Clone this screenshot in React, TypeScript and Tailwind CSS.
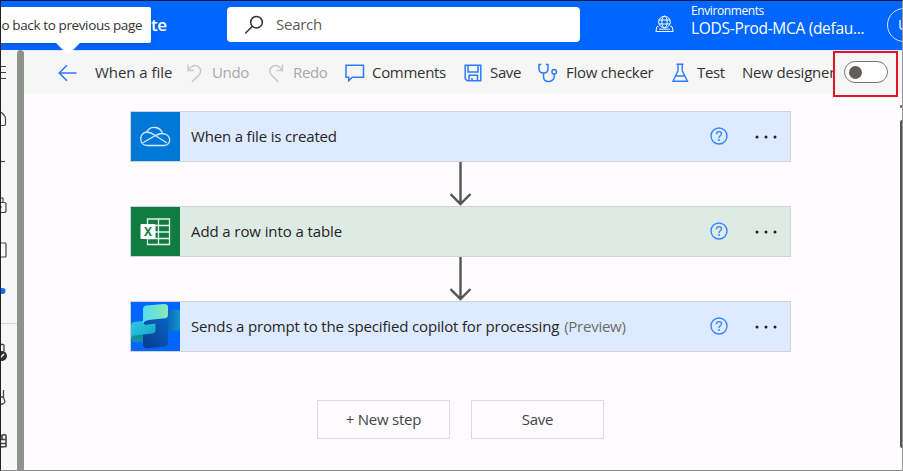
import React from 'react';

const fontStack = "font-['Open_Sans','Noto_Sans',sans-serif]";

function Sidebar() {
  return (
    <nav className="flex h-full w-[16px] shrink-0 flex-col overflow-hidden bg-[#f7f7f7] text-[#444]">
      <svg className="h-[273px] w-[16px] shrink-0" viewBox="0 0 16 273" fill="none" stroke="currentColor" strokeWidth="1.2">
        <path d="M0 16.5h5M0 22.5h5M0 28.5h5" />
        <path d="M-4 65q3-4 5-2l2 2q1.500 1.500 1.500 4v5q0 1.500-1.500 1.500H-1" />
        <path d="M-5 111.500h9" />
        <path d="M-2 148h4v5M-3 154.500q0-2 2-2h4q2 0 2 2v6q0 2-2 2h-4M-3 157h4" />
        <path d="M-4 193h8q1 0 1 1v12q0 1-1 1h-8" />
        <circle cx="1.500" cy="241" r="3" fill="#0f6cff" stroke="none" />
      </svg>
      <div className="h-px w-full shrink-0 bg-[#d5d5d5]" />
      <svg className="h-[146px] w-[16px] shrink-0" viewBox="0 324 16 146" fill="none" stroke="currentColor" strokeWidth="1.3">
        <path d="M-1 344.500h3q1 0 1 1v6" />
        <circle cx="1" cy="356" r="5" fill="#333" stroke="none" />
        <path d="M-1 358l4-4" stroke="#fff" />
        <path d="M-1 388v9h4M2.500 390v8q3 5-1 6h-3" />
        <path d="M0 435.500l4-1q1 0 1 2v10l-6 .5M-1 439.500h6M-1 443.500h6M1 435v5" strokeWidth="1.600" />
      </svg>
    </nav>
  );
}

function Header() {
  return (
    <header className="flex h-[49px] shrink-0 items-center overflow-hidden bg-[#0066ff] text-white">
      <div className="mt-[-2px] w-[226px] shrink-0 pl-[150px] text-[17px] font-semibold leading-[24px] tracking-[-0.5px]">te</div>
      <div className="mt-[-2px] flex h-[35px] w-[353px] shrink-0 items-center rounded-[4px] bg-white text-[#5c5c5c]">
        <svg className="ml-[17px] h-[20px] w-[20px]" viewBox="0 0 20 20" fill="none" stroke="#333" strokeWidth="1.5">
          <circle cx="12.500" cy="7.200" r="5.800" />
          <path d="M8.300 11.300L1.200 18.500" />
        </svg>
        <span className="ml-[12px] text-[15px] tracking-[-0.25px]">Search</span>
      </div>
      <svg className="ml-[75px] mt-[-3px] h-[18px] w-[19px] shrink-0" viewBox="0 0 19 18" fill="none" stroke="#fff" strokeWidth="1">
        <circle cx="9.500" cy="7" r="5.800" />
        <ellipse cx="9.500" cy="7" rx="2.600" ry="5.800" />
        <path d="M3.700 5h11.600M3.700 9h11.600M3.500 11.500H2L.8 16.500h17.400L17 11.500h-1.500M4 14.200h11" />
      </svg>
      <div className="mt-[-12px] ml-[17px] w-[196px] shrink-0">
        <div className="text-[12px] leading-[17px] tracking-[-0.4px]">Environments</div>
        <div className="text-[15.500px] leading-[19px] tracking-[-0.3px]">LODS-Prod-MCA (defau...</div>
      </div>
      <div className="mt-[-2px] flex h-[34px] w-[34px] shrink-0 items-center rounded-full border border-[#d7e5ff] pl-[10px] text-[14px]">U</div>
    </header>
  );
}

function CommandIcon({ width, children }: { width: string; children: React.ReactNode }) {
  return <span className={`flex shrink-0 items-center ${width}`}>{children}</span>;
}

function CommandBar() {
  return (
    <div className="flex h-[44px] shrink-0 items-center whitespace-nowrap border-t border-[#dbe7fb] bg-[#f6f6f6] pl-[34px] text-[15px] tracking-[-0.35px] text-[#333]">
      <CommandIcon width="w-[37px]">
        <svg className="h-[18px] w-[19px]" viewBox="0 0 19 18" fill="none" stroke="#2b7aff" strokeWidth="1.5">
          <path d="M18.500 9H1.500M9 1.200L1.200 9 9 16.800" />
        </svg>
      </CommandIcon>
      <span className="w-[92px] shrink-0 tracking-[-0.05px]">When a file</span>
      <CommandIcon width="w-[25px]">
        <svg className="h-[20px] w-[16px]" viewBox="0 0 16 20" fill="none" stroke="#c9c9c9" strokeWidth="1.500">
          <path d="M1 1.500v6h6M1.500 7C4 3.500 7.500 1.800 10.500 3.200c4 1.900 4 6.300 1.300 9L5 18.800" />
        </svg>
      </CommandIcon>
      <span className="w-[56px] shrink-0 text-[#a9a9a9]">Undo</span>
      <CommandIcon width="w-[25px]">
        <svg className="h-[20px] w-[16px]" viewBox="0 0 16 20" fill="none" stroke="#c9c9c9" strokeWidth="1.500">
          <path d="M14.500 1.500v6h-6M14 7C11.500 3.500 8 1.800 5 3.200c-4 1.900-4 6.300-1.300 9l6.500 6.600" />
        </svg>
      </CommandIcon>
      <span className="w-[52px] shrink-0 text-[#a9a9a9]">Redo</span>
      <CommandIcon width="w-[27px]">
        <svg className="h-[18px] w-[20px]" viewBox="0 0 20 18" fill="none" stroke="#2b7aff" strokeWidth="1.500">
          <path d="M1 1.200h17.500v12H7.300L3.700 16.700v-3.500H1z" />
        </svg>
      </CommandIcon>
      <span className="w-[92px] shrink-0 tracking-[-0.3px]">Comments</span>
      <CommandIcon width="w-[26px]">
        <svg className="h-[18px] w-[18px]" viewBox="0 0 18 18" fill="none" stroke="#2b7aff" strokeWidth="1.500">
          <path d="M1.200 1.200h15.600v15.600H3.200l-2-2zM4 1.500V8h10V1.500M5 16.500v-5.200h8.500v5.200M8 16.500v-2.500" />
        </svg>
      </CommandIcon>
      <span className="w-[48px] shrink-0">Save</span>
      <CommandIcon width="w-[28px]">
        <svg className="h-[20px] w-[20px]" viewBox="0 0 20 20" fill="none" stroke="#2b7aff" strokeWidth="1.500">
          <path d="M3.200 1.500H1v4.200c0 2.600 1.900 4.300 4.500 4.300S10 8.300 10 5.700V1.500H7.800M5.500 10v3.500c0 3 2 5 5 5s5.700-2 5.700-5V11" />
          <circle cx="16.200" cy="8.700" r="2.300" />
        </svg>
      </CommandIcon>
      <span className="w-[106px] shrink-0 tracking-[-0.25px]">Flow checker</span>
      <CommandIcon width="w-[25px]">
        <svg className="h-[20px] w-[17px]" viewBox="0 0 17 20" fill="none" stroke="#2b7aff" strokeWidth="1.400">
          <path d="M4.500 1.200h7M6 1.200v6.600L1 18.300h14.500L10.200 7.800V1.200M3.700 13h9" />
        </svg>
      </CommandIcon>
      <span className="w-[45px] shrink-0">Test</span>
      <span className="w-[102px] shrink-0 tracking-[-0.2px]">New designer</span>
      <span className="mb-px flex h-[22px] w-[44px] shrink-0 items-center rounded-full border border-[#777] bg-white pl-[4px]">
        <span className="h-[13px] w-[13px] rounded-full bg-[#605d5a]" />
      </span>
    </div>
  );
}

function OneDriveIcon() {
  return (
    <svg className="h-[49px] w-[49px]" viewBox="0 0 49 49" fill="none" stroke="#d8ebfb" strokeWidth="1.300">
      <path d="M16 33.500c-8 0-8.500-12-.5-13.500 4-6.500 13.500-6 16 1.500 9 .5 9.500 12 1.500 12z" />
      <path d="M15.500 20c3.500 0 5 1 8 3l12.500 8M31.500 21.500c-3 0-5 1-7.500 2.300L11.500 31" />
    </svg>
  );
}

function ExcelIcon() {
  return (
    <div className="grid h-[49px] w-[49px] grid-cols-1 grid-rows-1 bg-[#107c41]">
      <svg className="col-start-1 row-start-1 h-[49px] w-[49px]" viewBox="0 0 49 49" fill="none" stroke="#e5f2eb" strokeWidth="1.300">
        <path d="M16.500 12h22v25.500h-22zM27.500 12v25.500M16.500 18.500h22M16.500 25h22M16.500 31.500h22" />
        <rect x="9.500" y="17" width="15" height="15" rx="1" fill="#fff" stroke="none" />
      </svg>
      <span className="col-start-1 row-start-1 ml-[10px] mt-[17px] h-[15px] w-[14px] text-center text-[12px] font-bold leading-[15px] text-[#107c41]">X</span>
    </div>
  );
}

function CopilotIcon() {
  return (
    <svg className="h-[49px] w-[49px]" viewBox="0 0 49 49">
      <defs>
        <linearGradient id="top" x1="0" y1="0" x2="1" y2="0"><stop stopColor="#55dcf0" /><stop offset="1" stopColor="#8be8b4" /></linearGradient>
        <linearGradient id="left" x1="0" y1="0" x2="1" y2="1"><stop stopColor="#2fcbe0" /><stop offset="1" stopColor="#14a3c8" /></linearGradient>
        <linearGradient id="right" x1="0" y1="0" x2="1" y2="0"><stop stopColor="#0a64b8" /><stop offset="1" stopColor="#1294cf" /></linearGradient>
        <linearGradient id="bottom" x1="0" y1="1" x2="1" y2="0"><stop stopColor="#073b8e" /><stop offset="1" stopColor="#0863c1" /></linearGradient>
      </defs>
      <path fill="#0066ff" d="M0 0h49v49H0z" />
      <path fill="url(#right)" d="M36 9q1-1 4-1l6-.5q3 0 3 3V26q0 2.500-3 3l-10 1z" />
      <path fill="#128fa6" d="M0 33l12-1v8l-7 .5Q0 41 0 35z" />
      <path fill="url(#bottom)" d="M12 17h25v24q0 3-3 3.500l-17 1.700q-5 .3-5-4.200z" />
      <path fill="url(#left)" d="M0 24q0-3.500 3-4l9-1q0 4 3 3.700l9.500-1.200V28q0 3-3 3.500L5 33.300q-4 .5-5 2.700z" />
      <path fill="url(#top)" d="M12 7.500q0-3.500 3-4L33 2q4 0 4 3v8q0 3-3.500 3.300L18 18q-6 1-6 5z" />
    </svg>
  );
}

function StepCard({ tint, iconBg, icon, title, titleClass = '', note }: { tint: string; iconBg: string; icon: React.ReactNode; title: string; titleClass?: string; note?: string }) {
  return (
    <section className={`flex h-[51px] w-[661px] items-center border border-[#d2d3d5] text-[15px] ${tint}`}>
      <div className={`h-[49px] w-[49px] shrink-0 ${iconBg}`}>{icon}</div>
      <div className="w-[530px] shrink-0 whitespace-nowrap pl-[11px] text-[#252525]">
        <span className={titleClass}>{title}</span>
        {note && <span className="ml-[5px] tracking-[-0.25px] text-[#6b6b6b]">{note}</span>}
      </div>
      <svg className="mb-px h-[18px] w-[18px] shrink-0" viewBox="0 0 18 18" fill="none" stroke="#3b86ff" strokeWidth="1.400">
        <circle cx="9" cy="9" r="8" />
        <path d="M6.500 7.200c0-3.500 5-3.300 5-.4 0 2-2.500 2-2.500 4.200" />
        <circle cx="9" cy="13" r=".4" />
      </svg>
      <svg className="ml-[25px] h-[6px] w-[26px] shrink-0" viewBox="0 0 26 6" fill="#222">
        <circle cx="4" cy="3" r="1.500" /><circle cx="13" cy="3" r="1.500" /><circle cx="22" cy="3" r="1.500" />
      </svg>
    </section>
  );
}

function Connector() {
  return (
    <svg className="ml-[320px] h-[44px] w-[22px]" viewBox="0 0 22 44" fill="none" stroke="#555" strokeWidth="2.400">
      <path d="M10.500 0v42M.5 32l10 10 10-10" />
    </svg>
  );
}

function ActionButton({ children }: { children: React.ReactNode }) {
  return <button className="h-[39px] w-[133px] border border-[#dcdce0] text-[15px] tracking-[-0.25px] text-[#444]">{children}</button>;
}

export default function App() {
  return (
    <div className={`relative flex h-[471px] w-[903px] flex-col overflow-hidden border border-b-[#8d8d8d] border-l-[#222] border-r-[#999] border-t-[#061b40] bg-[#fefbff] ${fontStack}`}>
      <Header />
      <div className="flex min-h-0 flex-1">
        <Sidebar />
        <div className="w-[7px] shrink-0 rounded-t-[4px] bg-[#8f918f]" />
        <main className="flex min-w-0 flex-1 flex-col">
          <CommandBar />
          <div className="flex flex-1 justify-between">
            <div className="pl-[106px] pt-[17px]">
              <StepCard tint="bg-[#ddeaff]" iconBg="bg-[#0078d7]" icon={<OneDriveIcon />} title="When a file is created" titleClass="tracking-[-0.17px]" />
              <Connector />
              <StepCard tint="bg-[#deebe5]" iconBg="bg-[#107c41]" icon={<ExcelIcon />} title="Add a row into a table" titleClass="tracking-[-0.1px]" />
              <Connector />
              <StepCard tint="bg-[#ddeaff]" iconBg="bg-[#0066ff]" icon={<CopilotIcon />} title="Sends a prompt to the specified copilot for processing" titleClass="tracking-[-0.16px]" note="(Preview)" />
              <div className="ml-[187px] mt-[48px] flex gap-[21px]">
                <ActionButton>+ New step</ActionButton>
                <ActionButton>Save</ActionButton>
              </div>
            </div>
            <div className="mt-[11px] flex w-[2px] flex-col items-end">
              <span className="h-[3px] w-[2px] bg-[#777]" />
              <span className="mt-[12px] h-[328px] w-[2px] rounded-l bg-[#555]" />
            </div>
          </div>
        </main>
      </div>
      <div className="absolute left-0 top-[6px] h-[36px] w-[150px] overflow-hidden rounded-r-[2px] bg-white shadow-md">
        <div className="ml-[-9px] whitespace-nowrap text-[13.500px] leading-[36px] tracking-[-0.38px] text-[#333]">Go back to previous page</div>
      </div>
      <svg className="absolute left-[53px] top-[41px] h-[13px] w-[28px]" viewBox="0 0 28 13"><path fill="#fff" d="M1 0h26L14 13z" /></svg>
      <div className="absolute left-[832px] top-[50px] h-[46px] w-[65px] border-2 border-[#e81123]" />
    </div>
  );
}
